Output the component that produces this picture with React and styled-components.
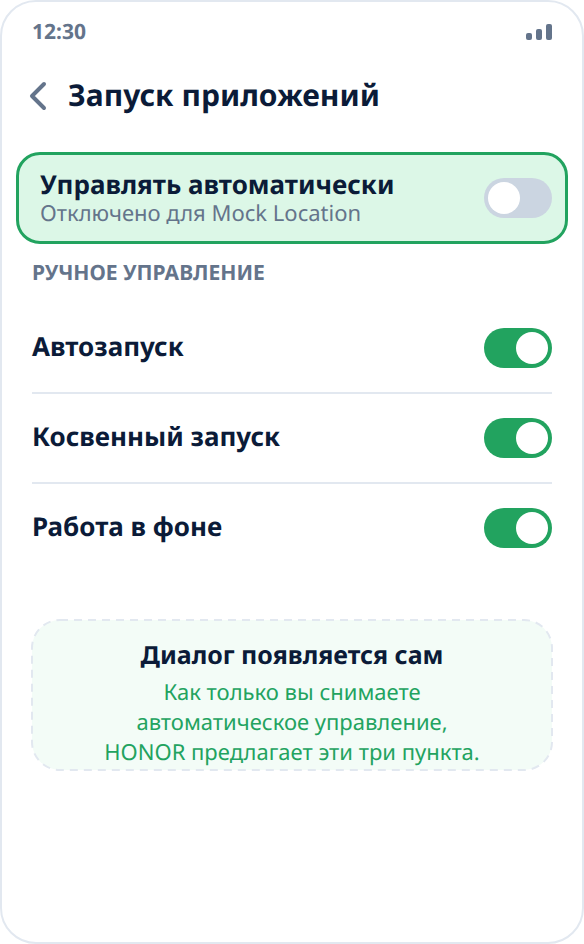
import React, { useState } from "react";
import styled, { createGlobalStyle } from "styled-components";

const GlobalStyle = createGlobalStyle`
  * {
    box-sizing: border-box;
  }
  body {
    margin: 0;
    background: #ffffff;
    color: #0b1b38;
    font-family: "Noto Sans", sans-serif;
    text-rendering: geometricPrecision;
  }
  h1, h2, h3, p {
    margin: 0;
  }
`;

const Screen = styled.main`
  min-height: 100vh;
  padding: 14px;
  border: 2px solid #e2e8f0;
  border-radius: 36px;
  background: #ffffff;
`;

const StatusBar = styled.div`
  display: flex;
  align-items: center;
  justify-content: space-between;
  height: 32px;
  padding: 0 16px;
  color: #64748b;
`;

const Time = styled.time`
  font-size: 21px;
  font-weight: 700;
  line-height: 30px;
`;

const Header = styled.header`
  display: flex;
  align-items: center;
  gap: 20px;
  height: 64px;
  margin-top: 16px;
  padding: 0 12px;
`;

const BackButton = styled.button`
  display: flex;
  padding: 0;
  border: none;
  background: none;
  color: #64748b;
  cursor: pointer;
`;

const Title = styled.h1`
  padding-bottom: 2px;
  font-size: 30px;
  font-weight: 700;
  line-height: 36px;
`;

const AutoCard = styled.label`
  display: flex;
  align-items: center;
  justify-content: space-between;
  height: 92px;
  margin-top: 24px;
  padding: 0 13px 0 21px;
  border: 3px solid #22a35f;
  border-radius: 24px;
  background: #dcf7e7;
  cursor: pointer;
`;

const Label = styled.span`
  display: block;
  font-size: 26px;
  font-weight: 700;
  line-height: 30px;
`;

const RowLabel = styled(Label)`
  padding-bottom: 4px;
`;

const Hint = styled.span`
  display: block;
  color: #64748b;
  font-size: 22px;
  line-height: 28px;
`;

const SectionTitle = styled.h2`
  padding: 0 16px;
  margin-top: 14px;
  color: #64748b;
  font-size: 21px;
  font-weight: 700;
  line-height: 30px;
  text-transform: uppercase;
`;

const List = styled.div`
  margin: 16px 16px 0;
`;

const Row = styled.label`
  display: flex;
  align-items: center;
  justify-content: space-between;
  height: 90px;
  border-bottom: 2px solid #e2e8f0;
  cursor: pointer;

  &:last-child {
    height: 88px;
    border-bottom: none;
  }
`;

const Switch = styled.input`
  appearance: none;
  display: flex;
  align-items: center;
  flex-shrink: 0;
  width: 68px;
  height: 40px;
  margin: 0;
  padding: 4px;
  border-radius: 20px;
  background: #cbd5e1;
  cursor: pointer;

  &::before {
    content: "";
    width: 32px;
    height: 32px;
    border-radius: 50%;
    background: #ffffff;
  }

  &:checked {
    justify-content: flex-end;
    background: #22a35f;
  }
`;

const Note = styled.section`
  position: relative;
  margin: 48px 16px 0;
  padding: 19px 16px 3px;
  border-radius: 28px;
  background: #f3fcf7;
  text-align: center;
`;

const Outline = styled.svg`
  position: absolute;
  inset: 0;
  width: 100%;
  height: 100%;
  overflow: visible;
`;

const NoteTitle = styled.h3`
  font-size: 25px;
  font-weight: 700;
  line-height: 32px;
`;

const NoteText = styled.p`
  margin-top: 6px;
  color: #22a35f;
  font-size: 22px;
  line-height: 30px;
`;

const Line = styled.span`
  display: block;
`;

const permissions = ["Автозапуск", "Косвенный запуск", "Работа в фоне"];

const noteLines = [
  "Как только вы снимаете",
  "автоматическое управление,",
  "HONOR предлагает эти три пункта.",
];

const SignalIcon = () => (
  <svg width="26" height="16" viewBox="0 0 26 16" fill="currentColor" aria-hidden="true">
    <rect x="0" y="9" width="6" height="7" rx="2" />
    <rect x="10" y="5" width="6" height="11" rx="2" />
    <rect x="20" y="0" width="6" height="16" rx="2" />
  </svg>
);

const BackIcon = () => (
  <svg width="20" height="30" viewBox="0 0 20 30" fill="none" aria-hidden="true">
    <path
      d="M16 3L4 15L16 27"
      stroke="currentColor"
      strokeWidth="4"
      strokeLinecap="round"
      strokeLinejoin="round"
    />
  </svg>
);

const PermissionRow = ({ name }) => {
  const [on, setOn] = useState(true);

  return (
    <Row>
      <RowLabel>{name}</RowLabel>
      <Switch type="checkbox" checked={on} onChange={() => setOn(!on)} />
    </Row>
  );
};

const App = () => {
  const [auto, setAuto] = useState(false);

  return (
    <>
      <GlobalStyle />
      <Screen>
        <StatusBar>
          <Time>12:30</Time>
          <SignalIcon />
        </StatusBar>
        <Header>
          <BackButton type="button" aria-label="Назад">
            <BackIcon />
          </BackButton>
          <Title>Запуск приложений</Title>
        </Header>
        <AutoCard>
          <span>
            <Label>Управлять автоматически</Label>
            <Hint>Отключено для Mock Location</Hint>
          </span>
          <Switch type="checkbox" checked={auto} onChange={() => setAuto(!auto)} />
        </AutoCard>
        <SectionTitle>Ручное управление</SectionTitle>
        <List>
          {permissions.map((name) => (
            <PermissionRow key={name} name={name} />
          ))}
        </List>
        <Note>
          <Outline aria-hidden="true">
            <rect
              width="100%"
              height="100%"
              rx="28"
              fill="none"
              stroke="#e2e8f0"
              strokeWidth="2"
              strokeDasharray="8 6"
            />
          </Outline>
          <NoteTitle>Диалог появляется сам</NoteTitle>
          <NoteText>
            {noteLines.map((line) => (
              <Line key={line}>{line}</Line>
            ))}
          </NoteText>
        </Note>
      </Screen>
    </>
  );
};

export default App;
